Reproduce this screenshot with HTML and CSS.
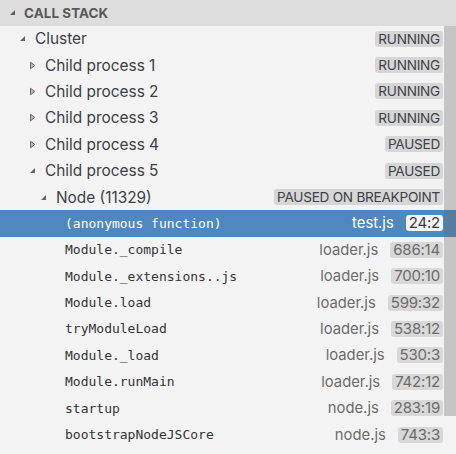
FILE: index.html
```html
<!DOCTYPE html>
<html>
<head>
<meta charset="utf-8">
<link rel="stylesheet" href="styles.css">
</head>
<body>
<div class="panel">
  <div class="header">
    <svg class="tw" width="7" height="7" viewBox="0 0 7 7"><path d="M6 1 L6 6 L1 6 Z" fill="#5e5e5e"/></svg>
    <span class="title">CALL STACK</span>
  </div>
  <div class="list">
    <div class="row l1"><svg class="tw" width="7" height="7" viewBox="0 0 7 7"><path d="M6 1 L6 6 L1 6 Z" fill="#646464"/></svg><span class="name">Cluster</span><span class="state">RUNNING</span></div>
    <div class="row l2"><svg class="tw" width="7" height="9" viewBox="0 0 7 9"><path d="M1.5 1.2 L5.8 4.5 L1.5 7.8 Z" fill="#b9b9b9" stroke="#6a6a6a" stroke-width="1"/></svg><span class="name">Child process 1</span><span class="state">RUNNING</span></div>
    <div class="row l2"><svg class="tw" width="7" height="9" viewBox="0 0 7 9"><path d="M1.5 1.2 L5.8 4.5 L1.5 7.8 Z" fill="#b9b9b9" stroke="#6a6a6a" stroke-width="1"/></svg><span class="name">Child process 2</span><span class="state">RUNNING</span></div>
    <div class="row l2"><svg class="tw" width="7" height="9" viewBox="0 0 7 9"><path d="M1.5 1.2 L5.8 4.5 L1.5 7.8 Z" fill="#b9b9b9" stroke="#6a6a6a" stroke-width="1"/></svg><span class="name">Child process 3</span><span class="state">RUNNING</span></div>
    <div class="row l2"><svg class="tw" width="7" height="9" viewBox="0 0 7 9"><path d="M1.5 1.2 L5.8 4.5 L1.5 7.8 Z" fill="#b9b9b9" stroke="#6a6a6a" stroke-width="1"/></svg><span class="name">Child process 4</span><span class="state">PAUSED</span></div>
    <div class="row l2"><svg class="tw" width="7" height="7" viewBox="0 0 7 7"><path d="M6 1 L6 6 L1 6 Z" fill="#646464"/></svg><span class="name">Child process 5</span><span class="state">PAUSED</span></div>
    <div class="row l3"><svg class="tw" width="7" height="7" viewBox="0 0 7 7"><path d="M6 1 L6 6 L1 6 Z" fill="#646464"/></svg><span class="name">Node (11329)</span><span class="state">PAUSED ON BREAKPOINT</span></div>
    <div class="row frame selected"><span class="fn">(anonymous function)</span><span class="file">test.js</span><span class="line">24:2</span></div>
    <div class="row frame"><span class="fn">Module._compile</span><span class="file">loader.js</span><span class="line">686:14</span></div>
    <div class="row frame"><span class="fn">Module._extensions..js</span><span class="file">loader.js</span><span class="line">700:10</span></div>
    <div class="row frame"><span class="fn">Module.load</span><span class="file">loader.js</span><span class="line">599:32</span></div>
    <div class="row frame"><span class="fn">tryModuleLoad</span><span class="file">loader.js</span><span class="line">538:12</span></div>
    <div class="row frame"><span class="fn">Module._load</span><span class="file">loader.js</span><span class="line">530:3</span></div>
    <div class="row frame"><span class="fn">Module.runMain</span><span class="file">loader.js</span><span class="line">742:12</span></div>
    <div class="row frame"><span class="fn">startup</span><span class="file">node.js</span><span class="line">283:19</span></div>
    <div class="row frame"><span class="fn">bootstrapNodeJSCore</span><span class="file">node.js</span><span class="line">743:3</span></div>
    <div class="scrollbar"></div>
  </div>
</div>
</body>
</html>
```

FILE: styles.css
```css
html, body {
  margin: 0;
  padding: 0;
  background: #f3f3f3;
}
.panel {
  width: 456px;
  height: 454px;
  background: #f3f3f3;
  font-family: Inter, "Noto Sans", sans-serif;
  overflow: hidden;
}
.header {
  height: 25.5px;
  background: #dddddd;
  display: flex;
  align-items: center;
  padding-left: 9px;
  box-sizing: border-box;
}
.header .tw {
  margin-right: 8px;
}
.title {
  font-size: 13.4px;
  font-weight: 700;
  color: #595959;
  letter-spacing: 0.1px;
}
.list {
  position: relative;
}
.row {
  height: 26.4px;
  display: flex;
  align-items: center;
  box-sizing: border-box;
  padding-right: 13px;
  color: #3b3f46;
  font-size: 15.4px;
  white-space: nowrap;
}
.row .tw {
  flex: none;
  width: 7px;
  margin-right: 9px;
}
.l1 { padding-left: 19px; }
.l2 { padding-left: 29px; }
.l3 { padding-left: 40px; }
.frame { padding-left: 65px; }
.name {
  flex: 1;
}
.state {
  font-size: 13.6px;
  background: #d6d6d6;
  color: #3d4149;
  border-radius: 3px;
  padding: 0 3px;
  line-height: 16px;
  height: 16px;
  letter-spacing: -0.25px;
}
.fn {
  flex: 1;
  font-family: "DejaVu Sans Mono", monospace;
  font-size: 13px;
  color: #333333;
}
.file {
  font-size: 14.8px;
  color: #6b6b6b;
  margin-right: 12px;
}
.line {
  font-size: 15px;
  background: #d8d8d8;
  color: #6b6b6b;
  border-radius: 3px;
  padding: 0 3px;
  line-height: 16px;
  height: 16px;
  letter-spacing: -0.2px;
}
.selected {
  background: #4e88bf;
}
.selected .fn, .selected .file {
  color: #ffffff;
}
.selected .line {
  background: #f5f5f5;
  color: #3a3a3a;
}
.scrollbar {
  position: absolute;
  top: 0;
  right: 0;
  width: 12px;
  height: 390px;
  background: rgba(100, 100, 100, 0.32);
}
```
